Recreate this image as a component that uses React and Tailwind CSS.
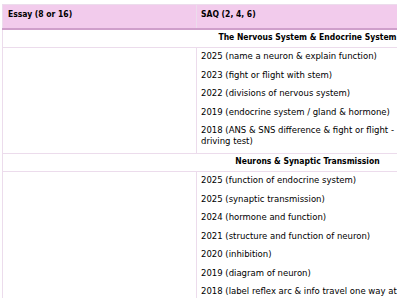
const nervous = [
  '2025 (name a neuron & explain function)',
  '2023 (fight or flight with stem)',
  '2022 (divisions of nervous system)',
  '2019 (endocrine system / gland & hormone)',
  '2018 (ANS & SNS difference & fight or flight - driving test)',
];

const neurons = [
  '2025 (function of endocrine system)',
  '2025 (synaptic transmission)',
  '2024 (hormone and function)',
  '2021 (structure and function of neuron)',
  '2020 (inhibition)',
  '2019 (diagram of neuron)',
  '2018 (label reflex arc & info travel one way at synapse)',
];

function Section({ title, items }) {
  return (
    <>
      <tr>
        <td colSpan={3} className="border border-[#ecdcec] pt-[2px] pb-[4px] leading-[11px] text-center font-bold font-['DejaVu_Sans_Condensed','DejaVu_Sans',sans-serif]">
          {title}
        </td>
      </tr>
      <tr>
        <td className="border border-[#ecdcec] align-top"></td>
        <td className="border border-[#ecdcec] align-top px-[4px] pt-[3px]">
          {items.map((t) => (
            <p key={t} className="mb-[7.5px] last:mb-[6px] leading-[11px]">{t}</p>
          ))}
        </td>
        <td className="border border-[#ecdcec] align-top"></td>
      </tr>
    </>
  );
}

export default function App() {
  return (
    <div className="w-screen h-screen overflow-hidden bg-white pt-[4px] pl-[2px] text-black text-[8.5px] font-['DejaVu_Sans',sans-serif]">
      <table className="table-fixed border-collapse w-[610px]">
        <colgroup>
          <col className="w-[194px]" />
          <col className="w-[209px]" />
          <col className="w-[207px]" />
        </colgroup>
        <thead>
          <tr className="bg-[#f2cbec] text-left font-['DejaVu_Sans_Condensed','DejaVu_Sans',sans-serif]">
            <th className="border border-[#ecdcec] border-b-2 border-b-[#cf9fcb] px-[5px] pt-[4px] pb-[8px] leading-[11px] font-bold">Essay (8 or 16)</th>
            <th className="border border-[#ecdcec] border-b-2 border-b-[#cf9fcb] px-[4px] pt-[4px] pb-[8px] leading-[11px] font-bold">SAQ (2, 4, 6)</th>
            <th className="border border-[#ecdcec] border-b-2 border-b-[#cf9fcb] px-[4px] pt-[4px] pb-[8px] leading-[11px] font-bold"></th>
          </tr>
        </thead>
        <tbody>
          <Section title="The Nervous System & Endocrine System" items={nervous} />
          <Section title="Neurons & Synaptic Transmission" items={neurons} />
        </tbody>
      </table>
    </div>
  );
}
